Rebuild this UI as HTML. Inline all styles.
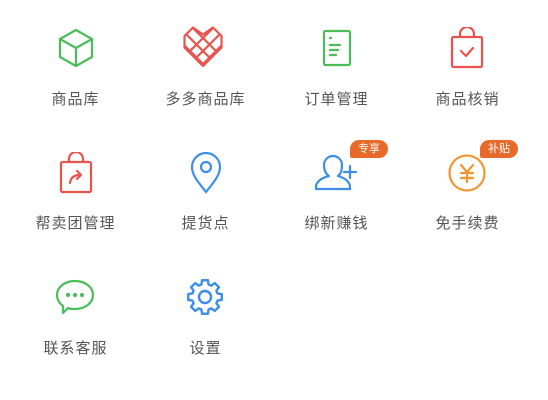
<!DOCTYPE html>
<html><head><meta charset="utf-8"><style>
body{margin:0;width:548px;height:400px;background:#fff;font-family:"Liberation Sans","Noto Sans CJK SC",sans-serif;position:relative;overflow:hidden}
.lb{position:absolute;width:131px;text-align:center;font-size:15px;color:#555;line-height:18px;letter-spacing:1px}
.bd{position:absolute;background:#e8692a;color:#fff;font-size:11px;line-height:18px;height:18px;width:38px;text-align:center;border-radius:9px 9px 9px 2px}
</style></head><body>
<!-- row1 -->
<svg style="position:absolute;left:56px;top:28px" width="40" height="40" viewBox="0 0 40 40" fill="none" stroke="#4cbb5a" stroke-width="2.2" stroke-linejoin="round"><path d="M20 2 L36 11 V29 L20 38 L4 29 V11 Z M4 11 L20 20 L36 11 M20 20 V38"/></svg>
<div class="lb" style="left:10px;top:91px">商品库</div>

<svg style="position:absolute;left:183px;top:25px" width="40" height="43" viewBox="0 0 40 43" fill="none" stroke="#e9534e" stroke-width="2.2" stroke-linejoin="round">
<defs><clipPath id="hc"><path d="M20 42 L1 23 V11 L10 2 L20 9 L30 2 L39 11 V23 Z"/></clipPath></defs>
<g clip-path="url(#hc)"><path d="M-10 -17 L50 43 M-10 -4 L50 56 M-10 9 L50 69 M50 -17 L-10 43 M50 -4 L-10 56 M50 9 L-10 69"/></g>
<path d="M20 41 L1.5 22.5 V11 L10 2.5 L20 9.5 L30 2.5 L38.5 11 V22.5 Z"/></svg>
<div class="lb" style="left:140px;top:91px">多多商品库</div>

<svg style="position:absolute;left:322px;top:29px" width="30" height="38" viewBox="0 0 30 38" fill="none" stroke="#4cbb5a" stroke-width="2.2"><rect x="2" y="2" width="26" height="34" rx="1.5"/><path d="M8 9h1M8 16h10M8 21h8M8 26h6" stroke-linecap="round"/></svg>
<div class="lb" style="left:271px;top:91px">订单管理</div>

<svg style="position:absolute;left:450px;top:27px" width="34" height="42" viewBox="0 0 34 42" fill="none" stroke="#e9534e" stroke-width="2.2" stroke-linejoin="round"><rect x="2" y="10" width="30" height="30" rx="1.5"/><path d="M10 10 V7 a7 7 0 0 1 14 0 V10 M11 24 L16 29 L23 21" stroke-linecap="round"/></svg>
<div class="lb" style="left:402px;top:91px">商品核销</div>

<!-- row2 -->
<svg style="position:absolute;left:59px;top:152px" width="34" height="42" viewBox="0 0 34 42" fill="none" stroke="#e9534e" stroke-width="2.2" stroke-linejoin="round"><rect x="2" y="10" width="30" height="30" rx="1.5"/><path d="M10 10 V7 a7 7 0 0 1 14 0 V10 M11 31 Q12 23 21 23 M18 19 L22 23 L18 27" stroke-linecap="round"/></svg>
<div class="lb" style="left:10px;top:215px">帮卖团管理</div>

<svg style="position:absolute;left:190px;top:152px" width="32" height="42" viewBox="0 0 32 42" fill="none" stroke="#3d8ee8" stroke-width="2.2"><path d="M16 40 C8 30 2 23 2 15 A14 14 0 0 1 30 15 C30 23 24 30 16 40 Z"/><circle cx="16" cy="15" r="5"/></svg>
<div class="lb" style="left:140px;top:215px">提货点</div>

<svg style="position:absolute;left:314px;top:154px" width="44" height="38" viewBox="0 0 44 38" fill="none" stroke="#3d8ee8" stroke-width="2.2" stroke-linejoin="round"><path d="M19 2 a9 9 0 0 0 -9 9 c0 5 2 9 5 11 c-8 2 -13 6 -13 11 v2 h34 v-2 c0 -5 -5 -9 -12 -11 c3 -2 4 -6 4 -11 a9 9 0 0 0 -9 -9 Z"/><path d="M36 12 v12 M30 18 h12" stroke-linecap="round"/></svg>
<div class="lb" style="left:271px;top:215px">绑新赚钱</div>
<div class="bd" style="left:350px;top:140px">专享</div>

<svg style="position:absolute;left:447px;top:153px" width="40" height="40" viewBox="0 0 40 40" fill="none" stroke="#f0962f" stroke-width="2.2"><circle cx="20" cy="20" r="17.5"/><path d="M14 12 L20 19 L26 12 M20 19 V29 M14 20h12M14 25h12" stroke-linecap="round"/></svg>
<div class="lb" style="left:402px;top:215px">免手续费</div>
<div class="bd" style="left:480px;top:140px">补贴</div>

<!-- row3 -->
<svg style="position:absolute;left:54px;top:278px" width="42" height="40" viewBox="0 0 42 40" fill="none" stroke="#4cbb5a" stroke-width="2.2" stroke-linejoin="round"><path d="M21 3 C31 3 39 9 39 17 C39 25 31 31 21 31 C18 31 16 31 14 30 L9 35 L9 28 C5 25 3 21 3 17 C3 9 11 3 21 3 Z"/><circle cx="14" cy="17" r="1" fill="#4cbb5a"/><circle cx="21" cy="17" r="1" fill="#4cbb5a"/><circle cx="28" cy="17" r="1" fill="#4cbb5a"/></svg>
<div class="lb" style="left:10px;top:340px">联系客服</div>

<svg style="position:absolute;left:186px;top:278px" width="38" height="38" viewBox="0 0 38 38" fill="none" stroke="#3d8ee8" stroke-width="2.4" stroke-linejoin="round"><path d="M31.5 15.42 L35.74 16.05 L35.74 21.95 L31.5 22.58 L30.37 25.3 L32.93 28.75 L28.75 32.93 L25.3 30.37 L22.58 31.5 L21.95 35.74 L16.05 35.74 L15.42 31.5 L12.7 30.37 L9.25 32.93 L5.07 28.75 L7.63 25.3 L6.5 22.58 L2.26 21.95 L2.26 16.05 L6.5 15.42 L7.63 12.7 L5.07 9.25 L9.25 5.07 L12.7 7.63 L15.42 6.5 L16.05 2.26 L21.95 2.26 L22.58 6.5 L25.3 7.63 L28.75 5.07 L32.93 9.25 L30.37 12.7 Z"/><circle cx="19" cy="19" r="6"/></svg>
<div class="lb" style="left:140px;top:340px">设置</div>
</body></html>
